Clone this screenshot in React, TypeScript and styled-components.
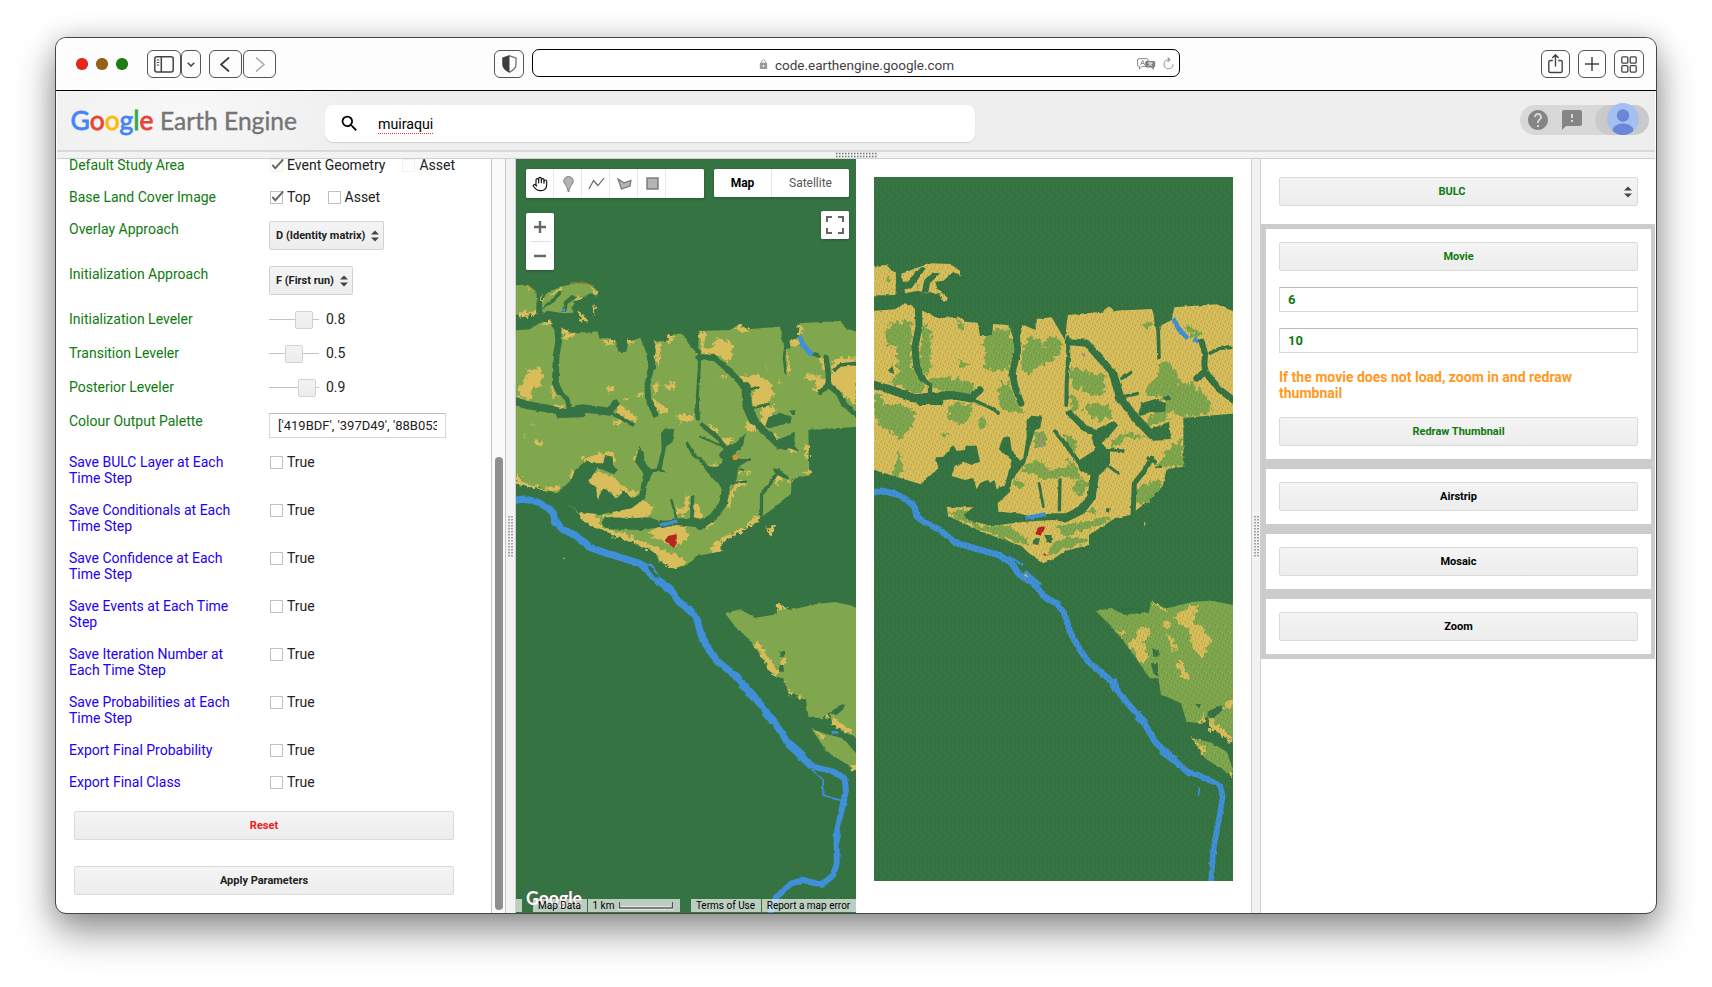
import React from 'react';
import styled, { createGlobalStyle } from 'styled-components';
import { MdHelp, MdFeedback, MdSearch, MdLock } from 'react-icons/md';
import { Hand } from 'lucide-react';

const GlobalStyle = createGlobalStyle`
  * { box-sizing: border-box; }
  html, body { margin: 0; padding: 0; background: #fff; overflow: hidden; }
  body { font-family: Roboto, "Liberation Sans", sans-serif; font-size: 14px; line-height: 16px; color: #222; }
`;

const Desktop = styled.div`
  width: 1712px;
  height: 987px;
  padding: 37px 55px 0;
  background: #fff;
`;

const BrowserWindow = styled.div`
  width: 1602px;
  height: 877px;
  display: flex;
  flex-direction: column;
  border: 1px solid #444;
  border-radius: 11px;
  background: #fff;
  overflow: hidden;
  padding: 0 1px;
  box-shadow: 0 18px 38px rgba(0, 0, 0, 0.42), 0 0 24px rgba(0, 0, 0, 0.14);
`;

/* ---------- browser chrome ---------- */

const Chrome = styled.div`
  height: 53px;
  flex: none;
  display: flex;
  align-items: flex-start;
  padding: 12px 12px 0 19px;
  margin: 0 -1px;
  background: #fdfdfd;
  border-bottom: 1px solid #000;
`;

const Lights = styled.div`
  display: flex;
  gap: 8px;
  padding: 8px 0 0 1px;
  margin-right: 19px;
`;

const Light = styled.span<{ $color: string }>`
  width: 12px;
  height: 12px;
  border-radius: 50%;
  background: ${(p) => p.$color};
  box-shadow: inset 0 0 0 0.5px rgba(0, 0, 0, 0.25);
`;

const ChromeButton = styled.div<{ $w: number; $ml?: number }>`
  width: ${(p) => p.$w}px;
  height: 28px;
  margin-left: ${(p) => p.$ml ?? 0}px;
  flex: none;
  display: flex;
  align-items: center;
  justify-content: center;
  border: 1px solid #555;
  border-radius: 6px;
`;

const UrlBar = styled.div`
  width: 648px;
  height: 28px;
  margin: -1px 0 0 8px;
  flex: none;
  display: grid;
  grid-template-columns: 60px 1fr 60px;
  align-items: center;
  border: 1.5px solid #000;
  border-radius: 7px;
  background: #fff;
`;

const UrlText = styled.div`
  grid-column: 2;
  display: flex;
  justify-content: center;
  align-items: center;
  gap: 6px;
  margin-top: 3px;
  font-size: 13.5px;
  color: #3f3f3f;
  svg { color: #999; }
`;

const UrlTools = styled.div`
  display: flex;
  justify-content: flex-end;
  align-items: center;
  gap: 7px;
  padding: 1px 5px 0 0;
`;

const Spacer = styled.div`
  flex: 1;
`;

/* ---------- app header ---------- */

const Header = styled.header`
  height: 61px;
  flex: none;
  display: flex;
  align-items: flex-start;
  background: radial-gradient(ellipse 190px 90px at 130px 20px, #f8f8f8, #eeeeee);
  border-bottom: 2px solid #d9d9d9;
`;

const LogoArt = styled.svg`
  width: 268px;
  height: 58px;
  flex: none;
  display: block;
`;

const SearchBox = styled.div`
  width: 650px;
  height: 37px;
  margin-top: 14px;
  display: flex;
  align-items: center;
  padding-left: 14px;
  background: #fff;
  border-radius: 8px;
  box-shadow: 0 1px 1px rgba(0, 0, 0, 0.14);
  color: #000;
`;

const Query = styled.span`
  margin-left: 18px;
  font-size: 14.2px;
  text-decoration: underline dotted #e33;
  text-decoration-thickness: 1.3px;
  text-underline-offset: 4px;
  text-decoration-skip-ink: none;
`;

const UserPill = styled.div`
  width: 129px;
  height: 30px;
  margin: 14px 6px 0 0;
  display: flex;
  align-items: center;
  gap: 10px;
  border-radius: 15px;
  background: #d8d8d8;
  padding-left: 6px;
  color: #858585;
  > svg { flex: none; }
`;

const AvatarPill = styled.div`
  width: 54px;
  height: 30px;
  margin-left: auto;
  display: flex;
  align-items: flex-end;
  justify-content: center;
  padding-left: 2px;
  border-radius: 15px;
  background: #cacaca;
  svg { display: block; flex: none; }
`;

const HSplitter = styled.div`
  height: 7px;
  flex: none;
  display: flex;
  justify-content: center;
  align-items: center;
  background: #f2f2f2;
  border-bottom: 1px solid #cfcfcf;
`;

/* ---------- work area ---------- */

const Work = styled.div`
  flex: 1;
  min-height: 0;
  display: flex;
`;

const ParamPanel = styled.div`
  width: 434px;
  flex: none;
  overflow: hidden;
  padding: 0 4px;
`;

const Rows = styled.div`
  margin-top: -10px;
`;

const Row = styled.div`
  display: flex;
  align-items: flex-start;
  padding: 8px;
`;

const Label = styled.div<{ $blue?: boolean }>`
  width: 176px;
  margin-right: 24px;
  flex: none;
  color: ${(p) => (p.$blue ? '#2200f5' : '#0f7a0f')};
`;

const Check = styled.div`
  display: flex;
  align-items: center;
  height: 16px;
  margin: 0 16px 0 1px;
`;

const Tick = styled.span<{ $dim?: boolean }>`
  width: 13px;
  height: 13px;
  margin-right: 4px;
  margin-top: 1px;
  flex: none;
  border: 1px solid ${(p) => (p.$dim ? '#f0f0f0' : '#c0c0c0')};
  svg { display: block; overflow: visible; }
`;

const Button = styled.div<{ $color?: string; $mt?: number }>`
  height: 29px;
  margin-top: ${(p) => p.$mt ?? 0}px;
  display: flex;
  align-items: center;
  justify-content: center;
  border: 1px solid #dadada;
  border-radius: 2px;
  background: linear-gradient(#f4f4f4, #ededed);
  font-size: 11px;
  font-weight: 700;
  color: ${(p) => p.$color ?? '#222'};
`;

const Dropdown = styled(Button)`
  padding: 0 5px 0 6px;
  gap: 6px;
  border-color: #d2d2d2;
  svg { margin-right: -1px; }
`;

const WideDropdown = styled(Button)`
  margin: 18px 17px 18px 18px;
  padding: 0 5px;
`;

const DropText = styled.span`
  flex: 1;
  text-align: center;
  padding-right: 5px;
`;

const Slider = styled.div`
  width: 50px;
  height: 18px;
  margin-right: 7px;
  display: flex;
  align-items: center;
  background: linear-gradient(#c4c4c4, #c4c4c4) 0 8px / 100% 1px no-repeat;
`;

const Thumb = styled.div`
  width: 18px;
  height: 18px;
  border: 1px solid #d2d2d2;
  border-radius: 2px;
  background: linear-gradient(#f3f3f3, #ececec);
`;

const Field = styled.div<{ $w?: number; $mt?: number; $bold?: boolean }>`
  width: ${(p) => (p.$w ? `${p.$w}px` : 'auto')};
  height: 25px;
  margin-top: ${(p) => p.$mt ?? 0}px;
  padding: 3px 8px 0;
  border: 1px solid #d6d6d6;
  border-top-color: #bcbcbc;
  color: ${(p) => (p.$bold ? '#0f7a0f' : '#222')};
  font-weight: ${(p) => (p.$bold ? 700 : 400)};
  font-size: 13px;
  line-height: 17px;
`;

const FieldText = styled.div`
  overflow: hidden;
  white-space: nowrap;
`;

const PanelButtons = styled.div`
  padding: 0 33px 0 13px;
`;

const ScrollTrack = styled.div`
  width: 15px;
  flex: none;
  padding: 298px 2px 0 3px;
  border: 1px solid #c6c6c6;
  border-width: 0 1px;
  background: #fafafa;
`;

const ScrollThumb = styled.div`
  width: 8px;
  height: 453px;
  border-radius: 4px;
  background: #8f8f8f;
`;

const VSplitter = styled.div<{ $w: number; $edge?: boolean }>`
  width: ${(p) => p.$w}px;
  flex: none;
  display: flex;
  justify-content: center;
  padding-top: 357px;
  background: #f2f2f2;
  border-right: 1px solid #d0d0d0;
  border-left: ${(p) => (p.$edge ? '1px solid #d0d0d0' : '0')};
`;

const MapPane = styled.div`
  position: relative;
  width: 340px;
  flex: none;
  background: #367343;
`;

const MapArt = styled.svg`
  display: block;
`;

const Overlay = styled.div<{ $x: number; $y: number; $w: number; $h: number; $col?: boolean }>`
  position: absolute;
  left: ${(p) => p.$x}px;
  top: ${(p) => p.$y}px;
  width: ${(p) => p.$w}px;
  height: ${(p) => p.$h}px;
  display: flex;
  flex-direction: ${(p) => (p.$col ? 'column' : 'row')};
  align-items: center;
  border-radius: 1.5px;
  background: #fff;
  box-shadow: 0 1px 3px rgba(0, 0, 0, 0.25);
`;

const Tool = styled.div`
  width: 28px;
  height: 29px;
  display: flex;
  align-items: center;
  justify-content: center;
  padding-left: 1px;
  border-right: 1px solid #e9e9e9;
`;

const MapType = styled.div<{ $active?: boolean }>`
  width: ${(p) => (p.$active ? 58 : 77)}px;
  text-align: center;
  font-size: 12px;
  line-height: 28px;
  font-weight: ${(p) => (p.$active ? 700 : 400)};
  color: ${(p) => (p.$active ? '#000' : '#565656')};
  border-right: ${(p) => (p.$active ? '1px solid #e6e6e6' : '0')};
`;

const ZoomCell = styled.div`
  width: 21px;
  height: 29px;
  display: flex;
  align-items: center;
  justify-content: center;
  & + & { border-top: 1px solid #e0e0e0; }
`;

const Credits = styled.div`
  position: absolute;
  left: 0;
  bottom: 1px;
  width: 340px;
  height: 13px;
  display: flex;
  font-size: 10px;
  line-height: 13px;
  color: #000;
`;

const Credit = styled.div<{ $w: number; $ml?: number }>`
  width: ${(p) => p.$w}px;
  margin-left: ${(p) => p.$ml ?? 0}px;
  padding-right: 1px;
  flex: none;
  display: flex;
  justify-content: center;
  align-items: center;
  gap: 4px;
  white-space: nowrap;
  background: rgba(245, 245, 245, 0.7);
`;

const Watermark = styled.svg`
  position: absolute;
  left: 6px;
  top: 727px;
`;

const ThumbPane = styled.div`
  width: 395px;
  flex: none;
  padding: 18px 0 0 18px;
  background: #fff;
`;

const RightPanel = styled.div`
  flex: 1;
  min-width: 0;
  overflow: hidden;
`;

const Card = styled.div`
  width: 395px;
  padding: 13px;
  border: 5px solid #ccc;
`;

const Warning = styled.div`
  margin: 16px 0;
  font-weight: 700;
  font-size: 14px;
  color: #ff9a1f;
`;

/* ---------- drawings ---------- */

const Updown = () => (
  <svg width="8" height="12" viewBox="0 0 8 12">
    <path d="M4 0.5 8 4.6H0zM4 11.5 0 7.4h8z" fill="#444" />
  </svg>
);

const GripH = () => (
  <svg width="31" height="5" viewBox="0 0 31 5" overflow="visible">
    {[0.5, 3.5].map((y) => (
      <path key={y} d={`M-5 ${y}H36`} stroke="#777" strokeWidth="1.3" strokeDasharray="1.5 1.5" />
    ))}
  </svg>
);

const GripV = () => (
  <svg width="5" height="41" viewBox="0 0 5 41">
    {[1, 4].map((x) => (
      <path key={x} d={`M${x} 0V41`} stroke="#888" strokeWidth="1.5" strokeDasharray="1.5 1.5" />
    ))}
  </svg>
);

const CheckMark = () => (
  <svg width="11" height="11" viewBox="0 0 11 11">
    <path d="M1.3 4.8 4.3 8.2 12.2 -0.6" fill="none" stroke="#666" strokeWidth="1.9" />
  </svg>
);

const Logo = () => (
  <LogoArt viewBox="0 0 268 58">
    <g fontFamily="Lato, sans-serif" fontSize="27.5" fontWeight="400">
      <text x="13.500" y="38.700" textLength="83" lengthAdjust="spacingAndGlyphs" strokeWidth="0.8">
        <tspan fill="#4285f4" stroke="#4285f4">G</tspan>
        <tspan fill="#ea4335" stroke="#ea4335">o</tspan>
        <tspan fill="#fbbc05" stroke="#fbbc05">o</tspan>
        <tspan fill="#4285f4" stroke="#4285f4">g</tspan>
        <tspan fill="#34a853" stroke="#34a853">l</tspan>
        <tspan fill="#ea4335" stroke="#ea4335">e</tspan>
      </text>
      <text x="103" y="38.700" fontSize="25.500" fill="#757575" stroke="#757575" strokeWidth="0.4" textLength="137" lengthAdjust="spacingAndGlyphs">Earth Engine</text>
    </g>
  </LogoArt>
);

const DARK = '#367343';
const FIELD = '#80a74d';
const BARE = '#d9bd5a';
const WATER = '#3f8fd9';
const BUILT = '#b5261f';

const Rough = ({ id, amount, freq }: { id: string; amount: number; freq: number }) => (
  <filter id={id} x="-5%" y="-5%" width="110%" height="110%" colorInterpolationFilters="sRGB">
    <feTurbulence type="fractalNoise" baseFrequency={freq} numOctaves={2} seed={7} result="n" />
    <feDisplacementMap in="SourceGraphic" in2="n" scale={amount} xChannelSelector="R" yChannelSelector="G" />
  </filter>
);

type Corridor = [path: string, width: number];
const Corridors = ({ items }: { items: Corridor[] }) => (
  <g fill="none" stroke={DARK} strokeLinejoin="round" strokeLinecap="round">
    {items.map(([d, w]) => <path key={d} d={d} strokeWidth={w} />)}
  </g>
);

const leftCorridors: Corridor[] = [
  ['M142 160 L146 215 L138 260 L136 340 L150 368', 20],
  ['M150 368 L172 388 L178 420', 14],
  ['M10 392 L50 405 L110 415 L165 430 L215 415 L260 420 L300 425', 24],
  ['M150 432 L215 430', 24],
  ['M300 425 L315 400', 20],
  ['M300 428 L335 445 L368 464', 11],
  ['M410 195 L424 290 L412 345 L415 390 L436 432', 18],
  ['M568 240 L568 290 L562 380 L564 440', 9],
  ['M560 420 L564 445', 14],
  ['M565 262 L615 264 L655 300 L690 335 L708 370', 18],
  ['M708 350 L712 410 L730 450', 28],
  ['M715 360 L745 350 M725 415 L775 402', 8],
  ['M730 445 L760 480 L800 520 L825 530', 20],
  ['M820 180 L832 230', 18],
  ['M826 232 L822 265 L828 310', 8],
  ['M905 250 L925 258', 10],
  ['M948 262 L955 310 L955 350', 16],
  ['M930 365 L955 345 L985 370 L1000 400 L1040 436', 16],
  ['M972 300 L990 285 L1040 280', 11],
  ['M576 465 L620 500 L655 545', 14],
  ['M570 500 L640 530', 6],
  ['M532 520 L550 555 L595 590', 9],
  ['M640 555 L665 535', 24],
  ['M655 570 L720 570 M650 590 L700 600', 6],
  ['M655 640 L708 635', 7],
  ['M650 640 L640 700 L610 740 L570 768', 23],
  ['M484 690 L500 750', 7],
  ['M548 680 L545 760', 11],
  ['M806 600 L785 635 L755 670 L754 735', 10],
  ['M795 602 L830 622', 14],
];

const leftBare = [
  'M50 42 L62 55 L54 58Z', 'M18 125 L55 128 L82 118 L78 132 L30 140Z', 'M92 68 L102 92 L95 98Z', 'M120 72 L150 52 L154 58 L115 85Z',
  'M240 45 L262 65 L258 80 L246 60Z', 'M195 82 L218 80 L216 88 L196 90Z', 'M252 95 L258 115 L250 140 L248 115Z', 'M202 125 L232 145 L220 158 L212 150Z',
  'M90 160 L120 153 L130 165 L110 168Z', 'M152 175 L190 190 L188 203 L165 205Z', 'M280 210 L315 210 L312 222 L285 225Z', 'M352 208 L375 215 L360 228Z',
  'M436 215 L455 222 L446 285 L438 275Z', 'M470 198 L490 195 L490 215 L476 215Z',
  'M566 183 L590 188 L578 230 L605 235 L625 205 L665 215 L668 260 L655 280 L635 262 L575 250Z', 'M672 175 L683 163 L722 182 L695 188Z',
  'M866 165 L882 170 L875 195 L864 195Z', 'M838 208 L868 208 L865 225 L842 230Z', 'M828 240 L838 270 L842 295 L832 318Z',
  'M52 300 L90 295 L100 320 L90 350 L70 352 L62 390 L30 385 L22 355 L45 340Z', 'M120 340 L138 375 L150 378 L130 385Z', 'M112 405 L168 410 L140 418Z',
  'M290 350 L312 348 L312 362 L295 368Z', 'M320 405 L345 410 L375 440 L378 460 L330 435 L318 428Z', 'M305 450 L335 452 L330 465 L312 465Z',
  'M430 345 L445 340 L445 360 L430 375Z', 'M465 345 L495 335 L490 360 L475 358Z', 'M425 385 L460 405 L478 430 L440 425Z', 'M498 435 L550 435 L550 455 L520 450 L510 465Z',
  'M685 318 L745 315 L785 340 L790 370 L775 398 L735 412 L722 380 L740 350 L710 355Z', 'M755 410 L795 405 L790 440 L765 465 L775 490 L820 505 L855 495 L845 510 L790 505 L750 470Z',
  'M880 320 L910 310 L930 330 L905 335Z', 'M925 320 L950 330 L935 370 L910 360Z',
  'M970 268 L1038 262 L1038 405 L1005 380 L970 350 L960 320Z', 'M930 262 L940 262 L950 300 L940 305Z', 'M705 450 L740 470 L735 485 L708 480Z',
  'M590 460 L625 480 L620 495 L600 485Z', 'M630 510 L660 500 L672 512 L640 525Z', 'M580 578 L605 588 L640 575 L610 595Z',
  'M70 510 L98 515 L95 530 L80 525Z', 'M18 610 L45 638 L100 655 L145 645 L148 665 L100 660 L18 640Z', 'M215 565 L255 555 L300 545 L315 555 L310 585 L285 590 L260 580 L230 585Z',
  'M182 595 L198 610 L180 630Z', 'M265 600 L320 625 L340 650 L360 665 L385 660 L380 682 L355 680 L335 660 L315 685 L295 665 L275 660 L262 690 L258 655 L230 635Z', 'M370 560 L385 545 L378 575Z',
  'M205 728 L240 725 L265 745 L280 775 L340 790 L440 835 L500 855 L535 880 L495 898 L450 875 L435 845 L330 805 L240 765 L215 750Z',
  'M265 740 L310 730 L400 690 L432 710 L415 740 L330 745Z', 'M410 790 L455 768 L528 765 L535 800 L510 825 L470 820Z',
  'M498 710 L520 715 L530 670 L542 700 L525 735 L505 735Z', 'M550 690 L562 705 L582 745 L555 745Z', 'M655 680 L680 635 L705 640 L670 665 L660 715 L645 710Z',
  'M605 750 L620 755 L580 780Z', 'M685 590 L698 600 L690 620Z', 'M700 610 L715 602 L720 615Z', 'M790 640 L805 610 L822 620 L800 645Z', 'M825 635 L850 630 L845 640Z',
  'M885 520 L897 530 L893 565 L885 560Z', 'M870 605 L900 600 L895 618Z', 'M755 740 L742 732 L700 775 L650 795 L605 828 L600 845 L632 845 L632 818 L700 785Z',
  'M765 768 L778 780 L785 765 L795 768 L780 805Z', 'M152 860 L175 866 L165 866Z', 'M840 530 L862 545 L835 545Z',
  'M375 375 L400 370 L398 385Z', 'M340 385 L360 382 L350 398Z', 'M805 330 L812 335 L806 345Z', 'M765 290 L772 292 L768 300Z', 'M630 318 L650 318 L645 330Z', 'M55 462 L78 464 L65 468Z', 'M40 490 L46 492 L44 502Z',
  'M800 1002 L840 1018 L802 1018Z', 'M730 1120 L745 1115 L785 1175 L805 1210 L798 1222 L775 1200 L760 1165Z', 'M810 1165 L825 1160 L828 1180 L815 1190Z', 'M820 1225 L828 1230 L822 1240Z',
  'M832 1255 L850 1262 L840 1278Z', 'M865 1275 L880 1278 L872 1292Z', 'M905 1375 L945 1400 L942 1410Z', 'M967 1338 L985 1350 L1035 1395 L1000 1385 L967 1362Z', 'M1018 1488 L1038 1480 L1038 1500 L1025 1505Z', 'M940 1340 L960 1328 L952 1345 L935 1346Z',
];

const LeftMap = () => (
  <MapArt width="340" height="754" viewBox="18 -333 1020 2262" preserveAspectRatio="none">
    <defs>
      <Rough id="edge" amount={9} freq={0.05} />
      <Rough id="patch" amount={26} freq={0.08} />
    </defs>
    <rect x="18" y="-333" width="1020" height="2262" fill={DARK} />
    <g filter="url(#edge)">
      <g fill={FIELD}>
        <path d="M0 45 L55 45 L80 66 L79 120 L60 132 L0 135Z" />
        <path d="M96 95 L108 72 L150 50 L200 40 L240 42 L262 62 L260 78 L240 70 L205 90 L185 110 L190 128 L160 130 L112 122 L98 132Z" />
        <path d="M0 182 L60 178 L90 158 L120 155 L132 175 L152 178 L190 190 L245 190 L262 183 L268 202 L318 212 L325 245 L350 246 L354 215 L390 203 L405 235 L420 300 L435 300 L437 215 L470 212 L490 193 L520 195 L535 220 L565 255 L566 183 L660 180 L683 165 L715 178 L810 170 L825 210 L830 235 L838 213 L870 200 L868 160 L990 153 L1010 175 L1050 190 L1050 470 L895 480 L898 615 L845 628 L843 668 L795 712 L755 740 L720 765 L660 798 L632 820 L630 845 L560 858 L530 885 L490 897 L445 870 L435 845 L340 805 L240 765 L205 730 L140 668 L100 658 L0 632Z" />
        <path d="M645 1030 L690 1018 L735 1043 L800 1033 L803 1005 L840 1020 L920 1002 L975 996 L1050 1012 L1050 1410 L1000 1385 L965 1355 L960 1328 L935 1345 L895 1340 L888 1290 L850 1270 L835 1270 L820 1225 L795 1220 L720 1110 L680 1075Z" />
        <path d="M905 1377 L950 1393 L1000 1405 L1038 1450 L1038 1500 L990 1470 L950 1445Z" />
      </g>
    </g>
    <g fill={BARE} filter="url(#patch)">{leftBare.map((d) => <path key={d} d={d} />)}</g>
    <g filter="url(#edge)">
      <Corridors items={leftCorridors} />
      <g fill={DARK}>
        <path d="M98 115 L150 62 L158 68 L120 105 L100 118Z M155 125 L162 95 L185 75 L202 82 L175 100 L168 125Z M192 95 L215 88 L240 68 L258 80 L248 115 L248 145 L225 135 L200 115Z" />
        <path d="M140 672 L185 628 L195 600 L230 570 L245 580 L280 580 L285 555 L308 560 L310 590 L325 600 L310 612 L280 600 L262 595 L235 635 L258 655 L262 690 L280 655 L300 665 L318 687 L340 662 L365 685 L388 675 L400 610 L375 575 L388 530 L402 555 L408 585 L425 598 L440 595 L455 540 L453 490 L465 475 L492 480 L488 515 L468 530 L455 598 L470 606 L430 606 L412 640 L405 685 L365 715 L270 733 L205 726Z" />
        <path d="M275 752 L290 742 L360 745 L420 742 L450 752 L450 770 L400 780 L300 778 L278 768Z M450 750 L510 745 L600 745 L590 765 L560 772 L500 765 L450 775Z" />
        <path d="M580 590 L625 590 L645 550 L705 492 L700 525 L665 560 L715 572 L685 590 L680 628 L655 650 L640 665 L625 640 L605 625Z" />
        <path d="M765 470 L775 442 L810 428 L845 440 L842 460 L810 465 L780 475Z M838 422 L858 420 L855 432 L842 432Z M800 510 L855 488 L852 525 L868 545 L825 530 L800 540Z" />
        <path d="M810 1143 L822 1143 L822 1160 L812 1160Z M806 1185 L820 1185 L822 1205 L808 1205Z M960 1330 L972 1318 L1005 1302 L1000 1318 L980 1335Z" />
      </g>
      <g fill="none" stroke={WATER} strokeLinejoin="round">
        <path d="M10 692 L40 687 L80 695 L115 715 L130 730 L135 755 L160 780 L195 795 L240 832 L290 850 L350 868 L390 880 L410 900 L440 930 L480 955 L490 970 L505 995 L540 1020 L560 1045 L575 1100 L600 1145 L625 1175 L690 1230 L740 1290 L790 1350 L830 1415 L880 1465 L905 1490" strokeWidth="21" />
        <path d="M440 930 L484 960 M695 1240 L735 1285 M765 1325 L790 1355 M835 1420 L880 1460" strokeWidth="26" />
        <path d="M400 880 L425 885 L450 930 L490 955" strokeWidth="7" />
        <path d="M895 1480 L920 1493 L970 1505 L1003 1525 L1008 1560 L997 1610 L980 1690 L980 1780 L970 1815 L935 1845 L880 1830 L845 1840 L800 1880 L780 1930" strokeWidth="18" />
        <path d="M905 1498 L940 1530 L938 1575 L995 1592" strokeWidth="5" />
        <path d="M868 198 L880 225 L906 255" strokeWidth="15" />
        <path d="M450 766 L502 753" strokeWidth="11" />
        <path d="M154 119 h11 M965 1387 h20" strokeWidth="8" />
      </g>
      <path d="M412 892 L422 892 L448 925 L435 922Z" fill={DARK} />
      <path d="M464 812 L475 797 L500 793 L500 820 L492 834Z" fill={BUILT} />
      <path d="M668 557 L687 555 L682 571 L668 570Z M50 44 L60 55 L54 57Z" fill="#db8c35" />
      <path d="M182 39 H225 L250 50" fill="none" stroke="#b58536" strokeWidth="3" />
    </g>
  </MapArt>
);

const rightGreens = [
  'M60 240 L90 212 L138 215 L140 290 L140 360 L175 380 L180 420 L150 432 L100 405 L70 400 L100 370 L95 290 L65 285Z',
  'M175 220 L200 240 L195 370 L170 375 L162 340Z', 'M190 385 L240 380 L330 400 L325 435 L240 425 L195 410Z', 'M345 280 L390 240 L430 235 L455 300 L435 360 L380 362 L355 350 L365 300Z',
  'M468 310 L490 260 L525 265 L535 295 L550 260 L585 265 L590 310 L560 335 L520 345 L500 370 L470 365Z', 'M405 400 L435 400 L460 465 L475 490 L410 480 L398 440Z',
  'M615 350 L650 360 L700 375 L722 370 L718 430 L680 440 L650 415 L620 420Z', 'M616 430 L640 445 L640 480 L620 480Z', 'M660 465 L735 465 L740 500 L700 515 L660 480Z',
  'M845 415 L880 375 L880 340 L915 335 L935 370 L945 400 L990 400 L1010 430 L1040 460 L1040 485 L990 500 L950 500 L920 480 L905 510 L845 530 L850 500 L905 470 L890 440 L845 435Z',
  'M27 430 L50 440 L60 470 L100 460 L145 480 L150 520 L120 555 L100 570 L80 545 L45 530 L27 480Z', 'M250 470 L280 455 L320 470 L315 510 L280 525 L250 500Z', 'M340 510 L365 500 L368 530 L340 540Z', 'M230 540 L255 555 L230 565Z',
  'M100 600 L115 650 L105 680 L75 670 L90 655Z', 'M505 550 L540 545 L545 590 L510 590Z', 'M595 550 L635 570 L630 610 L605 590Z', 'M480 640 L530 630 L550 660 L620 650 L600 625 L630 640 L650 690 L600 680 L540 690 L500 670 L470 660Z',
  'M450 685 L480 700 L470 715 L448 705Z', 'M640 690 L675 700 L650 735 L620 720Z', 'M735 570 L790 545 L850 565 L790 565 L740 595Z', 'M895 620 L950 560 L955 648 L905 650 L870 650Z', 'M812 715 L880 690 L895 705 L850 755 L815 765Z',
  'M250 790 L310 775 L300 800 L350 830 L430 825 L485 865 L490 885 L440 872 L340 838 L290 812Z', 'M580 825 L660 815 L730 800 L725 820 L620 850 L600 865 L670 865 L665 875 L590 900 L555 920 L550 895 L600 860Z', 'M650 790 L690 770 L690 790Z',
  'M60 85 L72 80 L78 92 L62 95Z M150 105 L165 108 L160 118Z', 'M960 225 L985 230 L1010 255 L990 265 L965 240Z', 'M280 205 L298 230 L285 235Z', 'M275 325 L320 345 L290 350Z', 'M825 225 L860 215 L850 240Z',
];

const rightCorridors: Corridor[] = [
  ['M160 165 L162 230 L150 290 L155 350 L172 385', 21],
  ['M172 385 L195 405 L195 440', 13],
  ['M27 405 L80 420 L150 445 L200 440 L260 435 L320 445', 25],
  ['M165 455 L225 455', 20],
  ['M320 442 L345 420', 21],
  ['M325 450 L370 470 L400 488', 10],
  ['M452 220 L458 300 L442 370 L450 410 L468 460', 20],
  ['M608 265 L610 310 L605 400 L604 465', 12],
  ['M610 275 L665 280 L700 320 L740 365 L755 400 L765 450', 21],
  ['M745 375 L765 440 L800 490 L860 555', 25],
  ['M770 385 L800 367 M775 440 L820 430', 10],
  ['M875 195 L880 250 L882 325', 11],
  ['M875 180 L880 220', 22],
  ['M1010 275 L1020 310 L1018 350', 18],
  ['M995 385 L1020 365 L1060 415 L1104 450', 20],
  ['M1035 310 L1065 295 L1098 293', 10],
  ['M615 490 L660 535 L700 550', 19],
  ['M570 545 L600 580 L640 635', 13],
  ['M690 550 L745 525', 20],
  ['M700 600 L775 602 M720 640 L760 670', 8],
  ['M690 670 L680 740 L650 780 L600 805', 25],
  ['M522 700 L535 770', 8],
  ['M585 690 L583 780', 10],
  ['M860 625 L840 660 L808 700 L804 800', 15],
  ['M850 625 L870 635', 12],
];

const RightMap = () => (
  <MapArt width="359" height="704" viewBox="27 -219 1077 2112" preserveAspectRatio="none">
    <defs>
      <Rough id="edgeR" amount={8} freq={0.05} />
      <Rough id="patchR" amount={30} freq={0.07} />
      <pattern id="dither" width="24" height="30" patternUnits="userSpaceOnUse">
        <path d="M0 0h3v9h-3zM9 6h3v9h-3zM18 12h3v9h-3zM6 21h3v9h-3zM15 24h3v6h-3z" fill="#12401a" opacity="0.14" />
        <path d="M3 9h3v9h-3zM12 0h3v6h-3zM21 3h3v6h-3zM12 18h3v6h-3z" fill="#5fa050" opacity="0.13" />
      </pattern>
    </defs>
    <rect x="27" y="-219" width="1077" height="2112" fill={DARK} />
    <g fill={BARE} filter="url(#edgeR)">
      <path d="M0 50 L65 45 L80 62 L95 68 L92 135 L0 137Z" />
      <path d="M108 72 L165 50 L200 40 L255 42 L285 62 L285 78 L265 66 L235 92 L210 95 L218 118 L250 145 L235 158 L225 130 L180 130 L160 122 L120 130 L118 110Z" />
      <path d="M0 185 L90 178 L120 160 L140 165 L155 185 L172 182 L220 205 L280 200 L300 215 L338 218 L345 258 L382 258 L384 222 L430 225 L455 290 L475 225 L512 240 L512 207 L560 202 L600 270 L608 195 L710 185 L730 170 L750 182 L860 177 L880 225 L890 225 L920 210 L928 172 L1055 163 L1120 190 L1120 490 L955 503 L955 650 L905 657 L893 708 L830 768 L795 795 L750 805 L672 855 L672 885 L600 903 L560 930 L535 940 L490 908 L470 888 L350 845 L250 798 L245 770 L165 702 L27 660 L0 655Z" />
    </g>
    <g fill={FIELD} filter="url(#patchR)">{rightGreens.map((d) => <path key={d} d={d} />)}</g>
    <g filter="url(#edgeR)">
      <path fill={FIELD} d="M693 1083 L740 1073 L780 1095 L852 1085 L858 1055 L905 1075 L985 1055 L1040 1052 L1120 1068 L1120 1480 L1080 1460 L1035 1415 L1025 1400 L1005 1420 L965 1415 L948 1360 L905 1340 L888 1335 L880 1285 L855 1285 L840 1265 L800 1205 L740 1130Z M980 1463 L1040 1478 L1085 1505 L1105 1560 L1090 1570 L1020 1525Z" />
    </g>
    <g fill={BARE} filter="url(#patchR)">
      <path d="M856 1055 L910 1080 L895 1082Z M750 1140 L780 1145 L770 1160Z M815 1130 L850 1140 L860 1150 L835 1175 L850 1225 L832 1238 L805 1200 L790 1180 L820 1160Z M895 1115 L920 1115 L918 1135 L890 1130Z M925 1105 L970 1070 L1000 1065 L985 1115 L1010 1130 L1040 1170 L1015 1220 L980 1190 L975 1140 L935 1115Z M905 1150 L925 1165 L940 1205 L920 1195Z M935 1230 L955 1240 L975 1290 L950 1285Z M1035 1405 L1100 1460 L1100 1475 L1035 1440Z M980 1460 L1020 1490 L1015 1520Z M1000 1415 L1025 1385 L1015 1415Z M1085 1350 L1104 1350 L1104 1370 L1075 1375Z M1088 1570 L1104 1565 L1104 1585Z" />
    </g>
    <g filter="url(#edgeR)">
      <Corridors items={rightCorridors} />
      <g fill={DARK}>
        <path d="M93 66 L106 70 L110 95 L125 95 L170 50 L182 55 L140 115 L115 118 L112 138 L92 138Z M170 128 L178 90 L200 68 L225 70 L195 100 L190 128Z M212 98 L245 92 L262 68 L282 72 L282 145 L250 145 L220 115Z" />
        <path d="M165 704 L220 655 L212 622 L235 620 L265 585 L275 603 L300 600 L302 587 L335 587 L345 635 L320 645 L295 635 L268 650 L260 678 L300 690 L325 685 L335 718 L345 700 L365 690 L375 698 L388 690 L395 718 L420 705 L440 630 L402 598 L415 560 L435 565 L440 600 L465 632 L475 625 L485 560 L485 510 L500 497 L532 500 L525 535 L510 540 L480 640 L440 690 L435 725 L398 760 L400 785 L460 790 L500 800 L560 790 L620 790 L600 815 L560 810 L480 815 L380 828 L310 810 L295 795 L325 772 L270 772 L240 770Z" />
        <path d="M635 635 L690 600 L680 560 L740 515 L760 525 L735 555 L710 580 L735 605 L735 640 L715 665 L690 685 L645 660Z M820 490 L830 460 L870 447 L903 460 L900 485 L860 488 L825 498Z M893 442 L912 436 L918 448 L905 455Z M850 540 L912 515 L918 570 L860 572Z" />
        <path d="M538 855 L560 855 L560 878 L545 880Z M505 865 L525 865 L520 885 L503 882Z M68 362 L82 348 L88 370Z M723 775 L737 775 L735 787 L724 787Z M862 1195 L882 1200 L880 1220 L865 1220Z M858 1240 L878 1238 L880 1282 L865 1270Z M1028 1385 L1070 1365 L1072 1380 L1045 1405 L1028 1402Z M990 1363 L1008 1362 L1003 1375Z M865 652 L890 645 L890 655Z" />
      </g>
      <g fill="none" stroke={WATER} strokeLinejoin="round">
        <path d="M15 730 L50 722 L95 733 L135 755 L150 775 L155 800 L185 820 L225 840 L270 878 L330 895 L400 915 L435 935 L465 975 L510 1005 L540 1042 L575 1060 L598 1090 L615 1145 L645 1200 L670 1235 L730 1285 L780 1350 L835 1415 L870 1475 L915 1520 L970 1568" strokeWidth="19" />
        <path d="M475 970 L520 1010 M740 1290 L755 1320 M815 1395 L840 1420 M890 1500 L930 1530" strokeWidth="26" />
        <path d="M430 920 L475 945" strokeWidth="7" />
        <path d="M965 1565 L1000 1575 L1065 1605 L1073 1640 L1063 1700 L1045 1800 L1038 1900" strokeWidth="17" />
        <path d="M1003 1610 L1001 1638" strokeWidth="5" />
        <path d="M925 205 L940 235 L968 265 M985 268 L1000 275" strokeWidth="14" />
        <path d="M482 804 L542 793" strokeWidth="12" />
      </g>
      <path d="M512 845 L520 832 L540 833 L530 857 L512 853Z M533 915 L540 910 L545 918Z" fill={BUILT} />
      <path d="M522 560 L528 562 L535 590 L524 588Z M650 308 L660 312 L662 320 L652 318Z" fill="#a58f80" />
      <path d="M476 975 L485 972 L486 982Z M832 840 L840 812 L842 820Z" fill={BARE} />
    </g>
    <rect x="27" y="-219" width="1077" height="2112" fill="url(#dither)" />
  </MapArt>
);

/* ---------- data ---------- */

const levelers = [
  { label: 'Initialization Leveler', value: 0.8 },
  { label: 'Transition Leveler', value: 0.5 },
  { label: 'Posterior Leveler', value: 0.9 },
];

const outputs = [
  'Save BULC Layer at Each Time Step',
  'Save Conditionals at Each Time Step',
  'Save Confidence at Each Time Step',
  'Save Events at Each Time Step',
  'Save Iteration Number at Each Time Step',
  'Save Probabilities at Each Time Step',
  'Export Final Probability',
  'Export Final Class',
];

const CheckItem = ({ text, on, dim }: { text: string; on?: boolean; dim?: boolean }) => (
  <Check>
    <Tick $dim={dim}>{on && <CheckMark />}</Tick>
    {text}
  </Check>
);

const icon = { fill: 'none', stroke: '#444', strokeWidth: 1.5 } as const;

export default function App() {
  return (
    <Desktop>
      <GlobalStyle />
      <BrowserWindow>
        <Chrome>
          <Lights>
            <Light $color="#e8261b" />
            <Light $color="#976214" />
            <Light $color="#1a7f10" />
          </Lights>
          <ChromeButton $w={34}>
            <svg width="20" height="17" viewBox="0 0 20 17" {...icon}>
              <rect x="0.8" y="0.8" width="18.4" height="15.2" rx="2" />
              <path d="M7.3 1v15" />
              <path d="M2.8 4h2.4M2.8 6.5h2.4M2.8 9h2.4" strokeWidth="1" />
            </svg>
          </ChromeButton>
          <ChromeButton $w={20}>
            <svg width="8" height="5" viewBox="0 0 8 5" {...icon}><path d="M0.7 0.7 4 4 7.3 0.7" /></svg>
          </ChromeButton>
          <ChromeButton $w={33} $ml={8}>
            <svg width="12" height="15" viewBox="0 0 12 15" fill="none" stroke="#333" strokeWidth="1.7"><path d="M9 0.5 1 7.5 9 14.5" /></svg>
          </ChromeButton>
          <ChromeButton $w={33} $ml={1}>
            <svg width="10" height="15" viewBox="0 0 10 15" fill="none" stroke="#a5a5a5" strokeWidth="1.5"><path d="M1 0.5 9 7.5 1 14.5" /></svg>
          </ChromeButton>
          <ChromeButton $w={30} $ml={218}>
            <svg width="15" height="18" viewBox="0 0 15 18">
              <path d="M7.5 0.8 14 3v6.5c0 3.5-3 6-6.5 7.7C4 15.5 1 13 1 9.5V3z" fill="#fff" stroke="#777" strokeWidth="1.4" />
              <path d="M7.5 0.5V17.5C4 15.8 0.5 13 0.5 9.5V2.7z" fill="#3d3d3d" />
            </svg>
          </ChromeButton>
          <UrlBar>
            <UrlText><MdLock size={11} />code.earthengine.google.com</UrlText>
            <UrlTools>
              <svg width="19" height="12" viewBox="0 0 19 12">
                <path d="M2 .6h7.5q1.4 0 1.4 1.4v5q0 1.4-1.4 1.4H5L2.5 11V8.4H2Q.6 8.4.6 7V2Q.6.6 2 .6z" fill="#fff" stroke="#888" strokeWidth="1" />
                <path d="M3.5 7 5.6 2.2 7.7 7M4.2 5.5h2.8" fill="none" stroke="#888" strokeWidth="0.9" />
                <path d="M9.5 3h7.3q1.4 0 1.4 1.4V8q0 1.4-1.4 1.4V12L14.2 9.4H9.5Q8.2 9.4 8.2 8V4.4Q8.2 3 9.5 3z" fill="#808080" />
                <path d="M10.8 5h5M13.3 4v1M11.5 8 15 5.2M11.8 5.3 15.3 8" stroke="#fff" strokeWidth="0.8" />
              </svg>
              <svg width="11" height="13" viewBox="0 0 11 13" fill="none" stroke="#999" strokeWidth="1.1">
                <path d="M6.5 2.8H5.5A4.5 4.5 0 1 0 10 7.3M4.6 0.5 7 2.8 4.6 5" />
              </svg>
            </UrlTools>
          </UrlBar>
          <Spacer />
          <ChromeButton $w={29}>
            <svg width="15" height="20" viewBox="0 0 15 20" {...icon} strokeWidth="1.4">
              <path d="M4.8 6.5H2.3Q.8 6.5 .8 8v9Q.8 18.500 2.300 18.500h10.400q1.500 0 1.500-1.500v-9Q14.200 6.500 12.700 6.500h-2.500M7.500 12.500V1M4.300 4 7.500 .8l3.200 3.200" />
            </svg>
          </ChromeButton>
          <ChromeButton $w={28} $ml={8}>
            <svg width="14" height="14" viewBox="0 0 14 14" {...icon}><path d="M7 0v14M0 7h14" /></svg>
          </ChromeButton>
          <ChromeButton $w={30} $ml={8}>
            <svg width="16" height="17" viewBox="0 0 16 17" {...icon} strokeWidth="1.3">
              {[[0.8, 0.8], [9.2, 0.8], [0.8, 9.7], [9.2, 9.7]].map(([x, y]) => (
                <rect key={`${x}-${y}`} x={x} y={y} width="6" height="6.4" rx="1" />
              ))}
            </svg>
          </ChromeButton>
        </Chrome>

        <Header>
          <Logo />
          <SearchBox>
            <MdSearch size={21} />
            <Query>muiraqui</Query>
          </SearchBox>
          <Spacer />
          <UserPill>
            <MdHelp size={24} />
            <MdFeedback size={24} />
            <AvatarPill>
              <svg width="32" height="32" viewBox="0 0 32 32">
                <defs><clipPath id="face"><circle cx="16" cy="16" r="16" /></clipPath></defs>
                <circle cx="16" cy="16" r="16" fill="#a5c0f0" />
                <g fill="#6986d8" clipPath="url(#face)">
                  <circle cx="16" cy="12.5" r="6.2" />
                  <ellipse cx="16" cy="27" rx="10.3" ry="6.5" />
                </g>
              </svg>
            </AvatarPill>
          </UserPill>
        </Header>
        <HSplitter><GripH /></HSplitter>

        <Work>
          <ParamPanel>
            <Rows>
              <Row>
                <Label>Default Study Area</Label>
                <CheckItem text="Event Geometry" on dim />
                <CheckItem text="Asset" dim />
              </Row>
              <Row>
                <Label>Base Land Cover Image</Label>
                <CheckItem text="Top" on />
                <CheckItem text="Asset" />
              </Row>
              <Row>
                <Label>Overlay Approach</Label>
                <Dropdown>D (Identity matrix)<Updown /></Dropdown>
              </Row>
              <Row>
                <Label>Initialization Approach</Label>
                <Dropdown>F (First run)<Updown /></Dropdown>
              </Row>
              {levelers.map((l) => (
                <Row key={l.label}>
                  <Label>{l.label}</Label>
                  <Slider><Thumb style={{ marginLeft: Math.round(l.value * 32) }} /></Slider>
                  {l.value}
                </Row>
              ))}
              <Row>
                <Label>Colour Output Palette</Label>
                <Field $w={177}><FieldText>['419BDF', '397D49', '88B053'</FieldText></Field>
              </Row>
              {outputs.map((o) => (
                <Row key={o}>
                  <Label $blue>{o}</Label>
                  <CheckItem text="True" />
                </Row>
              ))}
            </Rows>
            <PanelButtons>
              <Button $mt={13} $color="#f01818">Reset</Button>
              <Button $mt={26}>Apply Parameters</Button>
            </PanelButtons>
          </ParamPanel>
          <ScrollTrack><ScrollThumb /></ScrollTrack>
          <VSplitter $w={10}><GripV /></VSplitter>

          <MapPane>
            <LeftMap />
            <Overlay $x={10} $y={10} $w={178} $h={29}>
              <Tool><Hand size={16} color="#111" strokeWidth={1.7} /></Tool>
              <Tool>
                <svg width="11" height="16" viewBox="0 0 11 16"><path d="M5.5.6a4.7 4.7 0 0 1 4.7 4.7C10.2 8 6.4 10 6 15.5H5C4.6 10 .8 8 .8 5.3A4.7 4.7 0 0 1 5.5.6z" fill="#b4b4b4" stroke="#777" /></svg>
              </Tool>
              <Tool>
                <svg width="17" height="13" viewBox="0 0 17 13" fill="none" stroke="#666" strokeWidth="1.2"><path d="M1 12 5.5 3.5 10 8.5 16 1" /></svg>
              </Tool>
              <Tool>
                <svg width="15" height="12" viewBox="0 0 15 12" fill="#b4b4b4" stroke="#777" strokeWidth="1.2"><path d="M1 1 7 4.8 14 2.5 13 8 4.5 11z" /></svg>
              </Tool>
              <Tool>
                <svg width="13" height="13" viewBox="0 0 13 13"><rect x="1" y="1" width="11" height="11" fill="#b4b4b4" stroke="#777" strokeWidth="1.4" /></svg>
              </Tool>
            </Overlay>
            <Overlay $x={198} $y={10} $w={135} $h={28}>
              <MapType $active>Map</MapType>
              <MapType>Satellite</MapType>
            </Overlay>
            <Overlay $x={10} $y={54} $w={28} $h={57} $col>
              <ZoomCell><svg width="12" height="12" viewBox="0 0 12 12" stroke="#666" strokeWidth="2.4"><path d="M6 0v12M0 6h12" /></svg></ZoomCell>
              <ZoomCell><svg width="12" height="12" viewBox="0 0 12 12" stroke="#666" strokeWidth="2.4"><path d="M0 6h12" /></svg></ZoomCell>
            </Overlay>
            <Overlay $x={305} $y={52} $w={28} $h={28} $col>
              <svg width="18" height="28" viewBox="0 0 18 28" fill="none" stroke="#666" strokeWidth="2"><path d="M1 11V6h5M12 6h5v5M17 17v5h-5M6 22H1v-5" /></svg>
            </Overlay>
            <Watermark width="70" height="28" viewBox="0 0 70 28">
              <text x="4" y="19" fontFamily="Lato, sans-serif" fontWeight="700" fontSize="18" fill="#fff" stroke="#4e5f52" strokeWidth="1.6" paintOrder="stroke" textLength="56" lengthAdjust="spacingAndGlyphs">Google</text>
            </Watermark>
            <Credits>
              <Credit $w={6} />
              <Credit $w={54} $ml={11}>Map Data</Credit>
              <Credit $w={92} $ml={1}>
                1 km
                <svg width="56" height="8" viewBox="0 0 56 8" fill="none"><path d="M1.5 0v6h53V0" stroke="#fff" strokeWidth="3" /><path d="M1.5 0v6h53V0" stroke="#555" strokeWidth="1.7" /></svg>
              </Credit>
              <Credit $w={70} $ml={11}>Terms of Use</Credit>
              <Credit $w={94} $ml={1}>Report a map error</Credit>
            </Credits>
          </MapPane>

          <ThumbPane><RightMap /></ThumbPane>
          <VSplitter $w={10} $edge><GripV /></VSplitter>

          <RightPanel>
            <WideDropdown $color="#0f7a0f" $mt={18}><DropText>BULC</DropText><Updown /></WideDropdown>
            <Card>
              <Button $color="#0f7a0f">Movie</Button>
              <Field $bold $mt={16}>6</Field>
              <Field $bold $mt={16}>10</Field>
              <Warning>If the movie does not load, zoom in and redraw thumbnail</Warning>
              <Button $color="#0f7a0f">Redraw Thumbnail</Button>
            </Card>
            {['Airstrip', 'Mosaic', 'Zoom'].map((name) => (
              <Card key={name}><Button $color="#000">{name}</Button></Card>
            ))}
          </RightPanel>
        </Work>
      </BrowserWindow>
    </Desktop>
  );
}
